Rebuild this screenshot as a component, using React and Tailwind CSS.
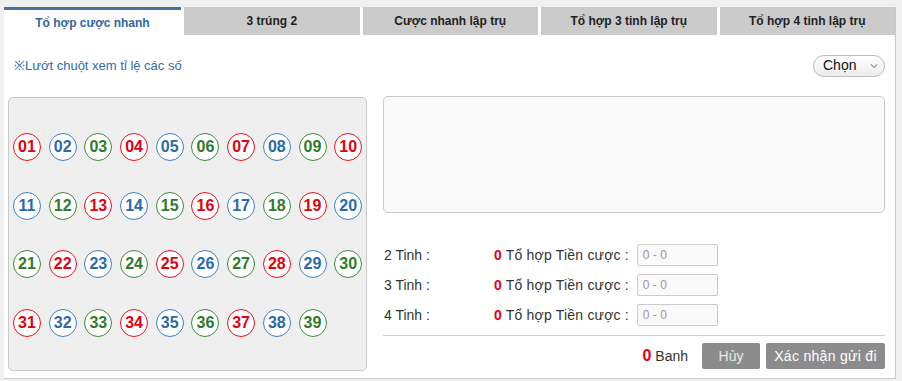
import React from "react";

const tabs = ["Tổ hợp cược nhanh", "3 trúng 2", "Cược nhanh lập trụ", "Tổ hợp 3 tinh lập trụ", "Tổ hợp 4 tinh lập trụ"];

function Ball({ n }) {
  const k = (n - 1) % 3;
  const cls =
    k === 0
      ? "border-[#e8101e] text-[#e3000f]"
      : k === 1
      ? "border-[#3b82c4] text-[#2a6aa8]"
      : "border-[#3d8a3a] text-[#2f7a2c]";
  return (
    <div className={`w-[28px] h-[28px] rounded-full border bg-white flex items-center justify-center text-[16px] font-bold leading-none ${cls}`}>
      {String(n).padStart(2, "0")}
    </div>
  );
}

function Row({ label }) {
  return (
    <div className="h-[30px] flex items-center text-[14px] text-[#333]">
      <div className="w-[111px] pl-px">{label}</div>
      <span className="text-[#e3000f] font-bold">0</span>
      <span className="ml-[4px] w-[131px] tracking-[0.2px]">Tổ hợp Tiền cược :</span>
      <div className="w-[81px] h-[22px] border border-[#ccc] rounded-[2px] bg-[#fafafa] flex items-center pl-[5px] text-[12px] text-[#999]">0 - 0</div>
    </div>
  );
}

export default function App() {
  const nums = Array.from({ length: 39 }, (_, i) => i + 1);
  return (
    <div className="w-[902px] h-[381px] bg-[#f0f0f0] pl-[4px] pt-[7px] pr-[6px] pb-[2px]" style={{ fontFamily: '"Liberation Sans", Arial, sans-serif' }}>
      <div className="h-full bg-white border-r border-b border-[#c8c8c8] flex flex-col">
        <div className="flex gap-[3px] h-[28px]">
          <div className="w-[177px] bg-white border-t-[3px] border-[#46729b] flex items-center justify-center text-[12px] font-bold text-[#2f68a2]">
            {tabs[0]}
          </div>
          {tabs.slice(1).map((t) => (
            <div key={t} className="flex-1 bg-[#cbcbcb] flex items-center justify-center text-[12px] font-bold text-[#222]">
              {t}
            </div>
          ))}
        </div>
        <div className="h-[61px] flex items-center justify-between pl-[10px] pr-[10px]">
          <span className="text-[13px] text-[#2e6eae]">※Lướt chuột xem tỉ lệ các số</span>
          <div className="w-[72px] h-[22px] rounded-full border border-[#bbb] bg-gradient-to-b from-white to-[#ececec] flex items-center justify-between pl-[9px] pr-[5px] text-[14px] text-[#111]">
            <span>Chọn</span>
            <svg width="10" height="10" viewBox="0 0 10 10"><path d="M2 3.5 L5 6.5 L8 3.5" fill="none" stroke="#999" strokeWidth="1.2" /></svg>
          </div>
        </div>
        <div className="flex pl-[4px]">
          <div className="w-[359px] h-[274px] bg-[#efefef] border border-[#c9c9c9] rounded-[5px] pl-[4px] pt-[35px] mt-[1px]">
            <div className="grid grid-cols-[repeat(10,28px)] gap-x-[7.7px] gap-y-[30.5px]">
              {nums.map((n) => (
                <Ball key={n} n={n} />
              ))}
            </div>
          </div>
          <div className="ml-[16px] w-[502px] flex flex-col">
            <div className="h-[117px] bg-[#fafafa] border border-[#c9c9c9] rounded-[5px]" />
            <div className="mt-[27px]">
              <Row label="2 Tinh :" />
              <Row label="3 Tinh :" />
              <Row label="4 Tinh :" />
            </div>
            <div className="mt-[5px] border-t border-[#cfcfcf]" />
            <div className="mt-[7px] flex items-center justify-end h-[26px]">
              <span className="text-[#e3000f] font-bold text-[16px]">0</span>
              <span className="ml-[4px] text-[14px] text-[#333]">Banh</span>
              <div className="ml-[14px] w-[58px] h-[26px] bg-[#8c8c8c] rounded-[2px] flex items-center justify-center text-[14px] text-[#e8e8e8]">Hủy</div>
              <div className="ml-[6px] w-[119px] h-[26px] bg-[#8c8c8c] rounded-[2px] flex items-center justify-center text-[14px] text-white tracking-[0.3px]">Xác nhận gửi đi</div>
            </div>
          </div>
        </div>
      </div>
    </div>
  );
}
